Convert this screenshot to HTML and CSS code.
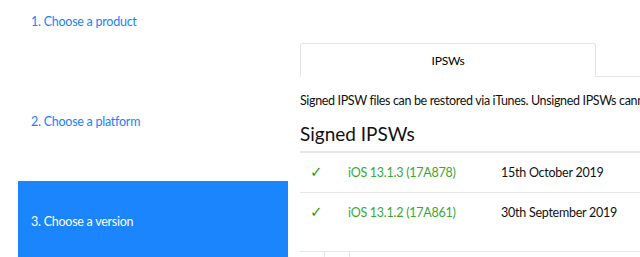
FILE: index.html
```
<!DOCTYPE html>
<html lang="en">
<head>
    <meta charset="UTF-8">
    <meta name="viewport" content="width=device-width, initial-scale=1.0">
    <title>Choose a version</title>
    <link rel="stylesheet" href="styles.css">
</head>
<body>
    <div class="page">
        <nav class="steps">
            <a class="step">1. Choose a product</a>
            <a class="step">2. Choose a platform</a>
            <a class="step active">3. Choose a version</a>
        </nav>

        <main class="content">
            <div class="tabs">
                <div class="tab">IPSWs</div>
                <div class="tab-fill"></div>
            </div>

            <p class="intro">Signed IPSW files can be restored via iTunes. Unsigned IPSWs cannot currently be restored.</p>

            <h2>Signed IPSWs</h2>
            <table class="firmware">
                <tr>
                    <td class="check">&#10003;</td>
                    <td class="version">iOS 13.1.3 (17A878)</td>
                    <td>15th October 2019</td>
                </tr>
                <tr>
                    <td class="check">&#10003;</td>
                    <td class="version">iOS 13.1.2 (17A861)</td>
                    <td>30th September 2019</td>
                </tr>
            </table>

            <div class="pager">
                <span class="pager-cell"></span>
                <span class="pager-cell"></span>
            </div>
        </main>
    </div>
</body>
</html>
```

FILE: styles.css
```
* {
    margin: 0;
    padding: 0;
    box-sizing: border-box;
}

html, body {
    height: 257px;
    overflow: hidden;
}

body {
    font-family: Lato, 'Open Sans', sans-serif;
    font-size: 12.5px;
    letter-spacing: -0.25px;
    color: #111;
    background: #fff;
}

.page {
    display: flex;
    gap: 12px;
}

.steps {
    width: 288px;
    flex-shrink: 0;
    display: flex;
    flex-direction: column;
    gap: 20px;
    margin-top: -19px;
    padding-left: 18px;
}

.step {
    height: 80px;
    display: flex;
    align-items: center;
    padding-left: 13px;
    color: #1a82fb;
    text-decoration: none;
}

.step.active {
    background: #1b85fd;
    color: #fff;
}

.content {
    flex: 1;
    min-width: 0;
    overflow: hidden;
    padding-top: 43px;
}

.tabs {
    display: flex;
    height: 34px;
}

.tab {
    width: 296px;
    border: 1px solid #e4e6e8;
    border-bottom: none;
    border-radius: 3px 3px 0 0;
    display: flex;
    align-items: center;
    justify-content: center;
    font-size: 12px;
    color: #000;
}

.tab-fill {
    flex: 1;
    border-bottom: 1px solid #e4e6e8;
}

.intro {
    margin-top: 15px;
    line-height: 18px;
    white-space: nowrap;
    letter-spacing: -0.35px;
}

h2 {
    font-weight: 400;
    font-size: 19px;
    letter-spacing: 0;
    line-height: 24px;
    margin-top: 12px;
    margin-bottom: 5px;
}

.firmware {
    width: 100%;
    border-collapse: collapse;
}

.firmware td {
    height: 40px;
    padding: 0 12px;
    border-top: 1px solid #e4e6e8;
    white-space: nowrap;
}

.firmware tr:first-child td {
    border-top: 2px solid #e4e6e8;
}

.firmware .check {
    width: 36px;
    color: #1f9e1f;
    padding-left: 10px;
    font-family: 'DejaVu Sans', sans-serif;
    font-weight: 700;
    font-size: 15px;
}

.firmware .version {
    width: 153px;
    color: #36a836;
}

.pager {
    display: flex;
    margin-top: 19px;
    height: 20px;
    border-top: 1px solid #e8e8e8;
}

.pager-cell {
    width: 25px;
    border-right: 1px solid #e8e8e8;
}
```
